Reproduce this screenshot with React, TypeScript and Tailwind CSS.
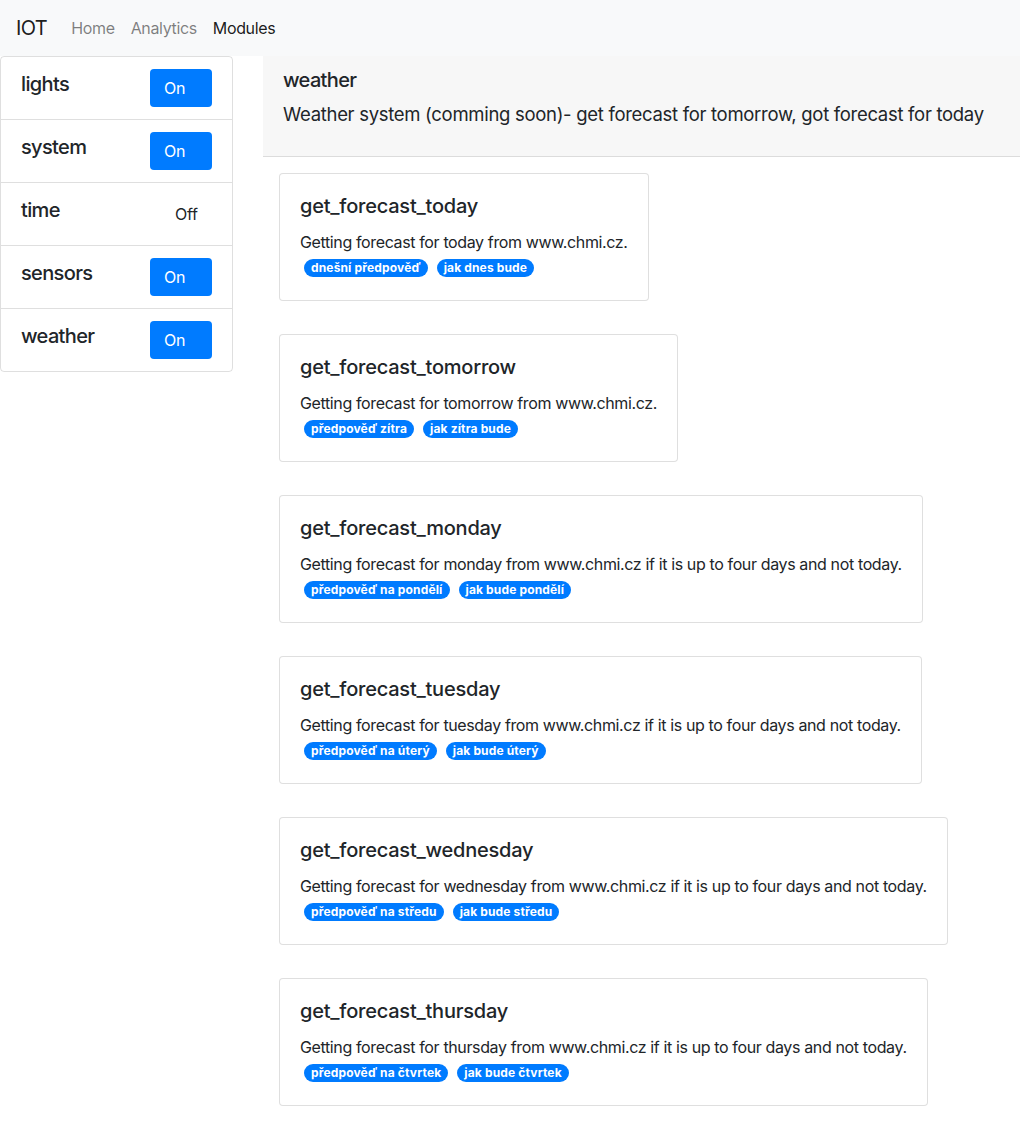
import React from "react"

const modules = [
  { name: "lights", on: true },
  { name: "system", on: true },
  { name: "time", on: false },
  { name: "sensors", on: true },
  { name: "weather", on: true },
]

const intents = [
  {
    name: "get_forecast_today",
    text: "Getting forecast for today from www.chmi.cz.",
    tags: ["dnešní předpověď", "jak dnes bude"],
  },
  {
    name: "get_forecast_tomorrow",
    text: "Getting forecast for tomorrow from www.chmi.cz.",
    tags: ["předpověď zítra", "jak zítra bude"],
  },
  {
    name: "get_forecast_monday",
    text: "Getting forecast for monday from www.chmi.cz if it is up to four days and not today.",
    tags: ["předpověď na pondělí", "jak bude pondělí"],
  },
  {
    name: "get_forecast_tuesday",
    text: "Getting forecast for tuesday from www.chmi.cz if it is up to four days and not today.",
    tags: ["předpověď na úterý", "jak bude úterý"],
  },
  {
    name: "get_forecast_wednesday",
    text: "Getting forecast for wednesday from www.chmi.cz if it is up to four days and not today.",
    tags: ["předpověď na středu", "jak bude středu"],
  },
  {
    name: "get_forecast_thursday",
    text: "Getting forecast for thursday from www.chmi.cz if it is up to four days and not today.",
    tags: ["předpověď na čtvrtek", "jak bude čtvrtek"],
  },
]

function Navbar() {
  return (
    <nav className="h-[56px] bg-[#f8f9fa] flex items-center px-4">
      <span className="text-[20px] tracking-[-0.6px] text-black/90 mr-4">IOT</span>
      <a className="px-2 text-[16px] tracking-[-0.35px] text-black/50">Home</a>
      <a className="px-2 text-[16px] tracking-[-0.35px] text-black/50">Analytics</a>
      <a className="px-2 text-[16px] tracking-[-0.35px] text-black/90">Modules</a>
    </nav>
  )
}

function ModuleList() {
  return (
    <div className="w-[233px] shrink-0 border border-black/[0.125] rounded-[4px] self-start">
      {modules.map((m, i) => (
        <div
          key={m.name}
          className={
            "flex justify-between items-start pl-5 pr-5 pt-3 " +
            (i > 0 ? "h-[63px] border-t border-black/[0.125]" : "h-[62px]")
          }
        >
          <span className="text-[20px] leading-[24px] tracking-[-0.65px] mt-[3px] text-[#212529] font-medium">
            {m.name}
          </span>
          {m.on ? (
            <span className="w-[62px] h-[38px] rounded-[4px] bg-[#007bff] text-white text-[16px] tracking-[-0.3px] flex items-center pl-[14px]">
              On
            </span>
          ) : (
            <span className="w-[62px] h-[38px] text-[#212529] text-[16px] tracking-[-0.3px] flex items-center pl-[25px]">
              Off
            </span>
          )}
        </div>
      ))}
    </div>
  )
}

function IntentCard({ intent }: { intent: (typeof intents)[number] }) {
  return (
    <div className="w-fit border border-black/[0.125] rounded-[4px] bg-white px-5 pt-5 pb-5">
      <h5 className="text-[20px] leading-[24px] tracking-[-0.22px] mb-3 text-[#212529] font-medium">
        {intent.name}
      </h5>
      <p className="text-[16px] leading-[24px] tracking-[-0.37px] text-[#212529]">{intent.text}</p>
      <div className="flex gap-[9px] pl-[4px] pt-[5px] h-[26px]">
        {intent.tags.map((t) => (
          <span
            key={t}
            className="h-[18px] px-[7px] rounded-full bg-[#007bff] text-white text-[12px] tracking-[0.15px] font-bold leading-[18px]"
          >
            {t}
          </span>
        ))}
      </div>
    </div>
  )
}

export default function App() {
  return (
    <div className="min-h-screen bg-white font-['Inter',sans-serif] text-[#212529]">
      <Navbar />
      <div className="flex">
        <ModuleList />
        <div className="flex-1 ml-[30px]">
          <div className="bg-[#f7f7f7] border-b border-[#dcdcdc] h-[101px] px-5 pt-[12px]">
            <h5 className="text-[20px] leading-[24px] tracking-[-0.65px] font-medium">weather</h5>
            <p className="text-[18.5px] leading-[24px] tracking-[-0.3px] mt-[10px]">
              Weather system (comming soon)- get forecast for tomorrow, got forecast for today
            </p>
          </div>
          <div className="flex flex-col gap-[33px] pl-4 pt-4 pb-6">
            {intents.map((it) => (
              <IntentCard key={it.name} intent={it} />
            ))}
          </div>
        </div>
      </div>
    </div>
  )
}
